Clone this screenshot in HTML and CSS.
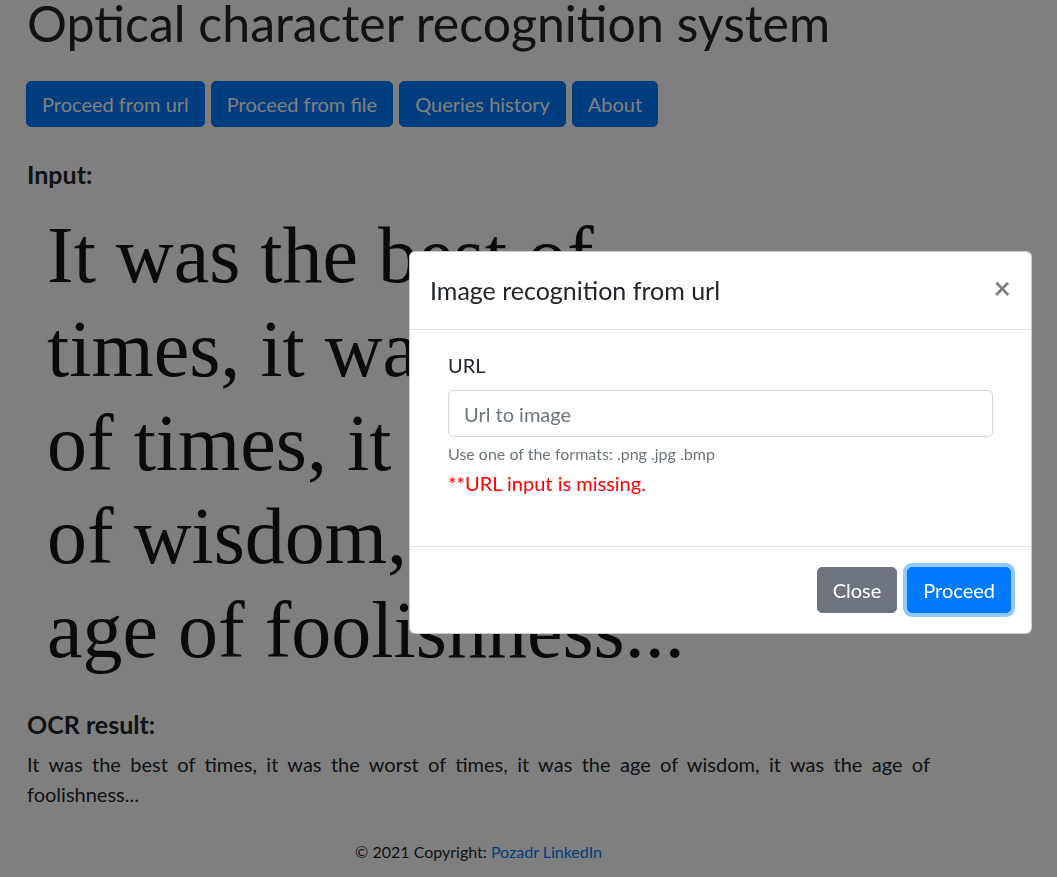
FILE: index.html
```html
<!DOCTYPE html>
<html lang="en">
<head>
<meta charset="utf-8">
<title>Optical character recognition system</title>
<link rel="stylesheet" href="styles.css">
</head>
<body>
<div class="page">
  <h1 class="title">Optical character recognition system</h1>
  <nav class="actions">
    <button class="btn btn-primary">Proceed from url</button>
    <button class="btn btn-primary">Proceed from file</button>
    <button class="btn btn-primary">Queries history</button>
    <button class="btn btn-primary">About</button>
  </nav>
  <h5 class="section-title">Input:</h5>
  <div class="sample">
    <div class="sample-line">It was the best of</div>
    <div class="sample-line">times, it was the worst</div>
    <div class="sample-line">of times, it was the age</div>
    <div class="sample-line">of wisdom, it was the</div>
    <div class="sample-line">age of foolishness...</div>
  </div>
  <h5 class="section-title result-title">OCR result:</h5>
  <p class="result">It was the best of times, it was the worst of times, it was the age of wisdom, it was the age of foolishness...</p>
  <footer class="copyright">© 2021 Copyright: <a class="link" href="#">Pozadr LinkedIn</a></footer>
</div>

<div class="backdrop"></div>

<div class="modal">
  <div class="modal-header">
    <h5 class="modal-title">Image recognition from url</h5>
    <button class="close" aria-label="Close">×</button>
  </div>
  <div class="modal-body">
    <div class="form-group">
      <label class="label" for="url">URL</label>
      <input class="input" id="url" type="text" placeholder="Url to image">
      <small class="help">Use one of the formats: .png .jpg .bmp</small>
      <div class="error">**URL input is missing.</div>
    </div>
  </div>
  <div class="modal-footer">
    <button class="btn btn-secondary">Close</button>
    <button class="btn btn-primary btn-focus">Proceed</button>
  </div>
</div>
</body>
</html>
```

FILE: styles.css
```css
* { box-sizing: border-box; }

html, body {
  margin: 0;
  padding: 0;
  background: #ffffff;
}

body {
  font-family: "Lato", "Noto Sans", sans-serif;
  color: #212529;
  font-size: 20px;
  line-height: 1.5;
  width: 1057px;
  height: 877px;
  overflow: hidden;
}

.page {
  padding: 0 127px 0 27px;
  width: 1057px;
}

.title {
  margin: 0;
  font-size: 50px;
  font-weight: 400;
  line-height: 46px;
}

.actions {
  display: flex;
  gap: 6px;
  margin-top: 35px;
  margin-left: -1px;
}

.btn {
  font-family: inherit;
  font-size: 20px;
  line-height: 30px;
  padding: 7px 15px;
  border: 1px solid transparent;
  border-radius: 5px;
  color: #ffffff;
  cursor: pointer;
}

.btn-primary {
  background: #007bff;
  border-color: #007bff;
}

.btn-secondary {
  background: #6c757d;
  border-color: #6c757d;
}

.btn-focus {
  box-shadow: 0 0 0 4px rgba(38, 143, 255, 0.5);
}

.section-title {
  margin: 0;
  font-size: 25px;
  font-weight: 700;
  line-height: 30px;
}

.actions + .section-title {
  margin-top: 32px;
}

.sample {
  padding: 20px 0 0 20px;
  font-family: "Liberation Serif", serif;
  font-size: 80px;
  line-height: 93.75px;
  color: #141414;
  height: 517px;
}

.result-title {
  margin-top: 3px;
}

.result {
  margin: 10px 0 0 0;
  text-align: justify;
  line-height: 30px;
}

.copyright {
  margin-top: 31px;
  text-align: center;
  font-size: 16px;
  line-height: 24px;
}

.link {
  color: #007bff;
  text-decoration: none;
}

.backdrop {
  position: fixed;
  inset: 0;
  background: rgba(0, 0, 0, 0.5);
}

.modal {
  position: absolute;
  left: 409px;
  top: 251px;
  width: 623px;
  background: #ffffff;
  border: 1px solid rgba(0, 0, 0, 0.2);
  border-radius: 6px;
}

.modal-header {
  display: flex;
  align-items: flex-start;
  justify-content: space-between;
  padding: 20px;
  border-bottom: 1px solid #dee2e6;
}

.modal-title {
  margin: 0;
  font-size: 25px;
  font-weight: 400;
  line-height: 37px;
}

.close {
  padding: 20px;
  margin: -20px -20px -20px auto;
  background: transparent;
  border: 0;
  font-family: inherit;
  font-size: 30px;
  font-weight: 700;
  line-height: 1;
  color: #000000;
  opacity: 0.5;
}

.modal-body {
  padding: 20px 38px 48px 38px;
}

.form-group {
  display: flex;
  flex-direction: column;
}

.label {
  line-height: 30px;
  margin-bottom: 10px;
}

.input {
  font-family: inherit;
  font-size: 20px;
  line-height: 30px;
  height: 47px;
  padding: 7px 15px;
  border: 1px solid #ced4da;
  border-radius: 5px;
  color: #495057;
}

.input::placeholder {
  color: #6c757d;
}

.help {
  margin-top: 5px;
  font-size: 16px;
  line-height: 24px;
  color: #6c757d;
}

.error {
  margin-top: 2px;
  color: #ff0000;
  line-height: 30px;
}

.modal-footer {
  display: flex;
  justify-content: flex-end;
  gap: 10px;
  padding: 20px;
  border-top: 1px solid #dee2e6;
}
```
